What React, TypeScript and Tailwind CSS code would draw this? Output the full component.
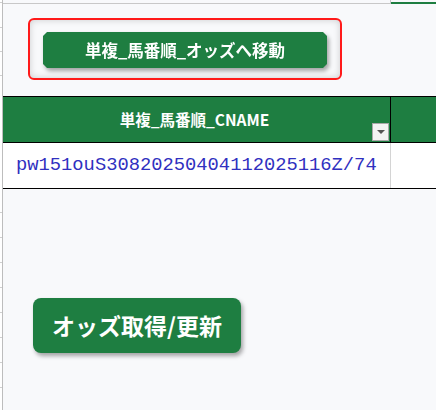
import React from "react";

const jp = { fontFamily: '"Noto Sans CJK JP", "Noto Sans", sans-serif' };

export default function App() {
  const gutterRows = [3, 25, 24, 24, 137, 25, 25, 25, 25, 25, 25, 25, 25];
  return (
    <div className="w-[436px] h-[410px] overflow-hidden bg-[#f8f9fb] flex">
      {/* row header gutter */}
      <div className="w-[3px] shrink-0 flex flex-col border-r border-[#bdbdbd] bg-white">
        {gutterRows.map((h, i) => (
          <div key={i} className="shrink-0 border-b border-[#d0d0d0]" style={{ height: h }} />
        ))}
      </div>

      <div className="flex-1 flex flex-col">
        {/* top strip */}
        <div className="flex h-[4px] shrink-0">
          <div className="w-[387px] border-b border-[#c8c8c8] bg-[#f8f9fb]" />
          <div className="w-px bg-[#c8c8c8]" />
          <div className="flex-1 border-b-2 border-[#1e7e41]" />
        </div>

        {/* red highlighted area */}
        <div className="ml-[25px] mt-[14px] w-[314px] h-[62px] rounded-[6px] border-2 border-[#ff1a1a] shadow-[inset_0_0_7px_rgba(0,0,0,0.18)] pl-[13px] pt-[12px]">
          <div className="w-[284px] h-[36px] [filter:drop-shadow(2px_3px_2px_rgba(0,0,0,0.35))]">
            <div
              className="w-full h-full bg-[#1e7e41] flex items-center justify-center text-white font-bold text-[16.5px] [clip-path:polygon(4px_0,calc(100%_-_4px)_0,100%_4px,100%_calc(100%_-_4px),calc(100%_-_4px)_100%,4px_100%,0_calc(100%_-_4px),0_4px)]"
              style={jp}
            >
              単複_馬番順_オッズへ移動
            </div>
          </div>
        </div>

        {/* table */}
        <div className="mt-[16px] flex flex-col border-t border-b border-black">
          <div className="flex h-[46px] bg-[#1e7e41] border-b border-black">
            <div className="w-[388px] relative flex items-center justify-center border-r border-black">
              <span className="text-white font-bold text-[15.5px] pr-[4px]" style={jp}>
                単複_馬番順_CNAME
              </span>
              <div className="absolute right-[1px] bottom-[1px] w-[17px] h-[18px] bg-[#f3f3f3] border border-[#a8a8a8] flex items-center justify-center">
                <div className="w-0 h-0 border-l-[4px] border-r-[4px] border-t-[4px] border-l-transparent border-r-transparent border-t-[#555]" />
              </div>
            </div>
            <div className="flex-1" />
          </div>
          <div className="flex h-[45px] bg-white">
            <div className="w-[388px] flex items-center pl-[13px] border-r border-[#d4d4d4]">
              <span
                className="text-[18.8px] text-[#3030c0] leading-none"
                style={{ fontFamily: '"Liberation Mono", "Courier New", monospace' }}
              >
                pw151ouS30820250404112025116Z/74
              </span>
            </div>
            <div className="flex-1" />
          </div>
        </div>

        {/* second button */}
        <div className="ml-[30px] mt-[109px] w-[208px] h-[55px] rounded-[8px] bg-[#1e7e41] shadow-[2px_3px_4px_rgba(0,0,0,0.35)] flex items-center justify-center">
          <span className="text-white font-bold text-[23px]" style={jp}>
            オッズ取得/更新
          </span>
        </div>
      </div>
    </div>
  );
}
